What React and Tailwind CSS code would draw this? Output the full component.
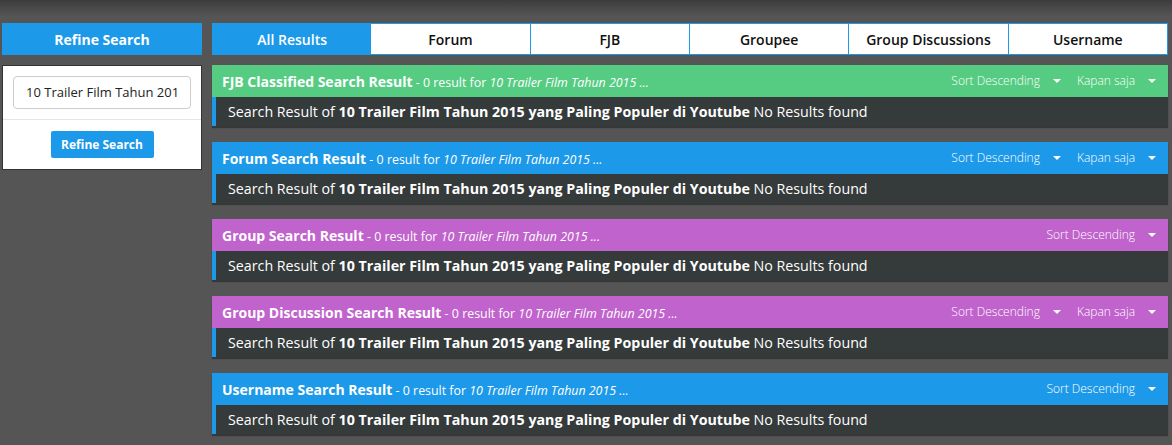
import React from "react";

const BLUE = "bg-[#1d99ea]";

function Caret() {
  return <span className="inline-block ml-[13px] w-0 h-0 border-l-[4px] border-r-[4px] border-t-[4px] border-l-transparent border-r-transparent border-t-white align-middle mb-[2px]" />;
}

function Section({ title, color, kapan }) {
  return (
    <div className="shadow-[0_2px_1px_rgba(0,0,0,0.35)]">
      <div className={`${color} h-[32px] flex items-center justify-between pl-[10px] pr-[12px] text-white`}>
        <div className="whitespace-nowrap">
          <span className="text-[14px] font-bold">{title}</span>
          <span className="text-[12.4px]"> - 0 result for </span>
          <span className="text-[12.4px] italic">10 Trailer Film Tahun 2015 ...</span>
        </div>
        <div className="flex items-center gap-[16px] text-[12px] font-light">
          <span>Sort Descending<Caret /></span>
          {kapan && <span>Kapan saja<Caret /></span>}
        </div>
      </div>
      <div className="bg-[#353a3b] h-[29px] border-l-[4px] border-[#1d99ea] pl-[12px] flex items-center text-white text-[14.25px] whitespace-nowrap">
        <span>Search Result of&nbsp;</span>
        <span className="font-bold">10 Trailer Film Tahun 2015 yang Paling Populer di Youtube</span>
        <span>&nbsp;No Results found</span>
      </div>
    </div>
  );
}

export default function App() {
  const tabs = ["All Results", "Forum", "FJB", "Groupee", "Group Discussions", "Username"];
  return (
    <div
      className="w-[1172px] h-[445px] bg-[#555555] bg-[linear-gradient(to_bottom,#3c3c3c_0px,#555555_16px)] flex gap-[10px] pl-[2px] pt-[23px] overflow-hidden"
      style={{ fontFamily: '"Open Sans", sans-serif' }}
    >
      <div className="w-[200px] flex flex-col gap-[10px]">
        <div className={`${BLUE} h-[32px] flex items-center justify-center text-white text-[14px] font-bold`}>Refine Search</div>
        <div className="bg-white border border-[#333] h-[105px] flex flex-col">
          <div className="px-[10px] pt-[10px] pb-[10px] border-b border-[#e5e5e5]">
            <div className="h-[33px] border border-[#ccc] rounded-[4px] flex items-center px-[12px] text-[13px] text-[#222]">
              <span className="block overflow-hidden whitespace-nowrap w-full">10 Trailer Film Tahun 2015 yang Paling Populer di Youtube</span>
            </div>
          </div>
          <div className="flex justify-center pt-[11px]">
            <div className={`${BLUE} w-[103px] h-[27px] rounded-[2px] flex items-center justify-center text-white text-[12px] font-bold`}>Refine Search</div>
          </div>
        </div>
      </div>
      <div className="w-[956px] flex flex-col gap-[10px]">
        <div className="flex h-[32px] border border-[#1d99ea] bg-white">
          {tabs.map((t, i) => (
            <div
              key={t}
              className={`flex-1 flex items-center justify-center text-[14px] font-semibold ${i === 0 ? "bg-[#1d99ea] text-white" : "text-[#111]"} ${i > 1 ? "border-l border-[#1d99ea]" : ""}`}
            >
              {t}
            </div>
          ))}
        </div>
        <div className="flex flex-col gap-[16px]">
          <Section title="FJB Classified Search Result" color="bg-[#55cc82]" kapan />
          <Section title="Forum Search Result" color="bg-[#1d99ea]" kapan />
          <Section title="Group Search Result" color="bg-[#c063cc]" />
          <Section title="Group Discussion Search Result" color="bg-[#c063cc]" kapan />
          <Section title="Username Search Result" color="bg-[#1d99ea]" />
        </div>
      </div>
    </div>
  );
}
